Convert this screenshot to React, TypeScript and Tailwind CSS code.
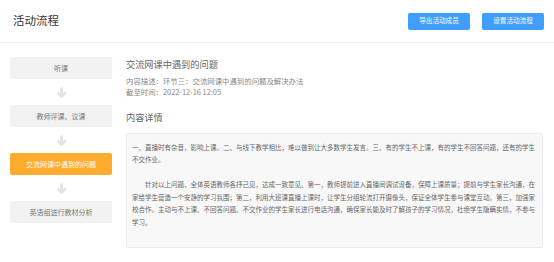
const steps = ['听课', '教师评课、议课', '交流网课中遇到的问题', '英语组进行教材分析']
const active = 2

function Arrow() {
  return (
    <div className="flex h-[26px] items-center justify-center">
      <svg width="11" height="11" viewBox="0 0 11 11" fill="none">
        <path d="M5.5 0.5v9" stroke="#e4e4e4" strokeWidth="3" />
        <path d="M1.2 5.3l4.3 4.3 4.3-4.3" stroke="#e4e4e4" strokeWidth="2.6" />
      </svg>
    </div>
  )
}

export default function App() {
  const font = { fontFamily: '"Noto Sans CJK SC", "Noto Sans", sans-serif' }
  return (
    <div className="h-[262px] w-[554px] overflow-hidden bg-white" style={font}>
      <div className="flex h-[43px] items-center justify-between border-b border-[#f0f0f0] pl-[13px] pr-[10px]">
        <h1 className="text-[11.5px] text-[#333]">活动流程</h1>
        <div className="flex gap-[12px]">
          <button className="flex h-[17px] w-[62px] items-center justify-center rounded-[2px] bg-[#409eff] text-[6.6px] text-white">导出活动成员</button>
          <button className="flex h-[17px] w-[62px] items-center justify-center rounded-[2px] bg-[#409eff] text-[6.6px] text-white">设置活动流程</button>
        </div>
      </div>

      <div className="flex">
        <div className="w-[102px] ml-[10px] pt-[14px] shrink-0">
          {steps.map((s, i) => (
            <div key={s}>
              <div className={`flex h-[22px] items-center justify-center rounded-[2px] text-[7px] ${i === active ? 'bg-[#ffab2e] text-white' : 'bg-[#f2f2f2] text-[#777]'}`}>{s}</div>
              {i < steps.length - 1 && <Arrow />}
            </div>
          ))}
        </div>

        <div className="ml-[14px] w-[417px] pt-[14.5px]">
          <div className="text-[9.2px] leading-[12px] text-[#666]">交流网课中遇到的问题</div>
          <div className="mt-[5px] text-[7.4px] leading-[11px] text-[#888]">内容描述：环节三：交流网课中遇到的问题及解决办法</div>
          <div className="text-[7.4px] leading-[11px] text-[#888]">截至时间：2022-12-16 12:05</div>
          <div className="mt-[14px] text-[9.2px] leading-[12px] text-[#666]">内容详情</div>
          <div className="mt-[10.5px] h-[115px] rounded-[2px] border border-[#ececec] bg-[#f8f8f9] pl-[5px] pr-[6px] pt-[6.5px] text-[6.5px] leading-[12.5px] text-[#666]">
            <p>一、直播时有杂音，影响上课。二、与线下教学相比，难以做到让大多数学生发言。三、有的学生不上课，有的学生不回答问题，还有的学生不交作业。</p>
            <p className="mt-[12.5px] indent-[2em]">针对以上问题，全体英语教师各抒己见，达成一致意见。第一，教师提前进入直播间调试设备，保障上课质量；提前与学生家长沟通，在家给学生营造一个安静的学习氛围；第二，利用大班课直播上课时，让学生分组轮流打开摄像头，保证全体学生参与课堂互动。第三，加强家校合作。主动与不上课、不回答问题、不交作业的学生家长进行电话沟通，确保家长能及时了解孩子的学习情况，杜绝学生隐瞒实情，不参与学习。</p>
          </div>
        </div>
      </div>
    </div>
  )
}
